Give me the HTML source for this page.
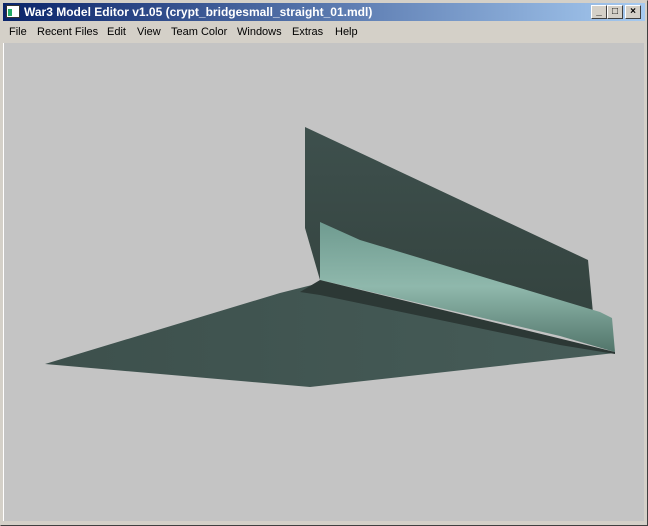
<!DOCTYPE html>
<html><head><meta charset="utf-8"><style>
body{margin:0;width:648px;height:526px;background:#d4d0c8;overflow:hidden;font-family:"Liberation Sans",sans-serif;position:relative}
.frame{position:absolute;left:0;top:0;width:646px;height:524px;border:1px solid #404040;border-top-color:#d4d0c8;border-left-color:#d4d0c8;}
.title{position:absolute;left:3px;top:3px;width:642px;height:18px;background:linear-gradient(90deg,#0a246a,#a6caf0);color:#fff;font-weight:bold;font-size:12px;line-height:18px}
.title .ic{position:absolute;left:3px;top:2px;width:14px;height:13px;background:#fff;border:1px solid #333;box-sizing:border-box}
.title .ic:after{content:"";position:absolute;left:1px;top:3px;width:4px;height:7px;background:#2a6}
.title span{position:absolute;left:21px;top:0;white-space:nowrap}
.btn{position:absolute;top:5px;width:16px;height:14px;background:#d4d0c8;box-sizing:border-box;border:1px solid;border-color:#fff #404040 #404040 #fff;font-size:10px;line-height:12px;text-align:center;color:#000;font-weight:bold}
.menu{position:absolute;left:3px;top:22px;height:20px;width:642px;font-size:11px;line-height:20px;color:#000}
.menu span{position:absolute;top:0;white-space:nowrap}
.view{position:absolute;left:3px;top:43px;width:640px;height:478px;background:#c4c4c4;border-left:1px solid #fff;}
</style></head><body>
<div class="frame"></div>
<div class="title"><div class="ic"></div><span>War3 Model Editor v1.05 (crypt_bridgesmall_straight_01.mdl)</span></div>
<div class="btn" style="left:591px">_</div>
<div class="btn" style="left:607px">□</div>
<div class="btn" style="left:625px">×</div>
<div class="menu">
<span style="left:6px">File</span><span style="left:34px">Recent Files</span><span style="left:104px">Edit</span><span style="left:134px">View</span><span style="left:168px">Team Color</span><span style="left:234px">Windows</span><span style="left:289px">Extras</span><span style="left:332px">Help</span>
</div>
<div class="view"></div>
<svg width="648" height="526" style="position:absolute;left:0;top:0">
<defs>
<linearGradient id="fl" x1="0" y1="0" x2="1" y2="0"><stop offset="0" stop-color="#3d504c"/><stop offset="1" stop-color="#465c58"/></linearGradient>
<linearGradient id="wl" x1="0" y1="0" x2="0" y2="1"><stop offset="0" stop-color="#3e504d"/><stop offset="1" stop-color="#34433f"/></linearGradient>
<linearGradient id="st" x1="0" y1="0" x2="0" y2="1"><stop offset="0" stop-color="#6f9b90"/><stop offset="0.5" stop-color="#8fb8ac"/><stop offset="1" stop-color="#52756b"/></linearGradient>
</defs>
<polygon points="45,364 280,293 320,283 615,353 310,387" fill="url(#fl)"/>
<polygon points="305,127 588,260 593,313 320,280 305,228" fill="url(#wl)"/>
<polygon points="320,222 360,240 600,312 612,318 615,352 560,336 320,280" fill="url(#st)"/>
<polygon points="320,280 615,352 615,354 560,345 320,295 300,292" fill="#2c3835"/>
</svg>
</body></html>
